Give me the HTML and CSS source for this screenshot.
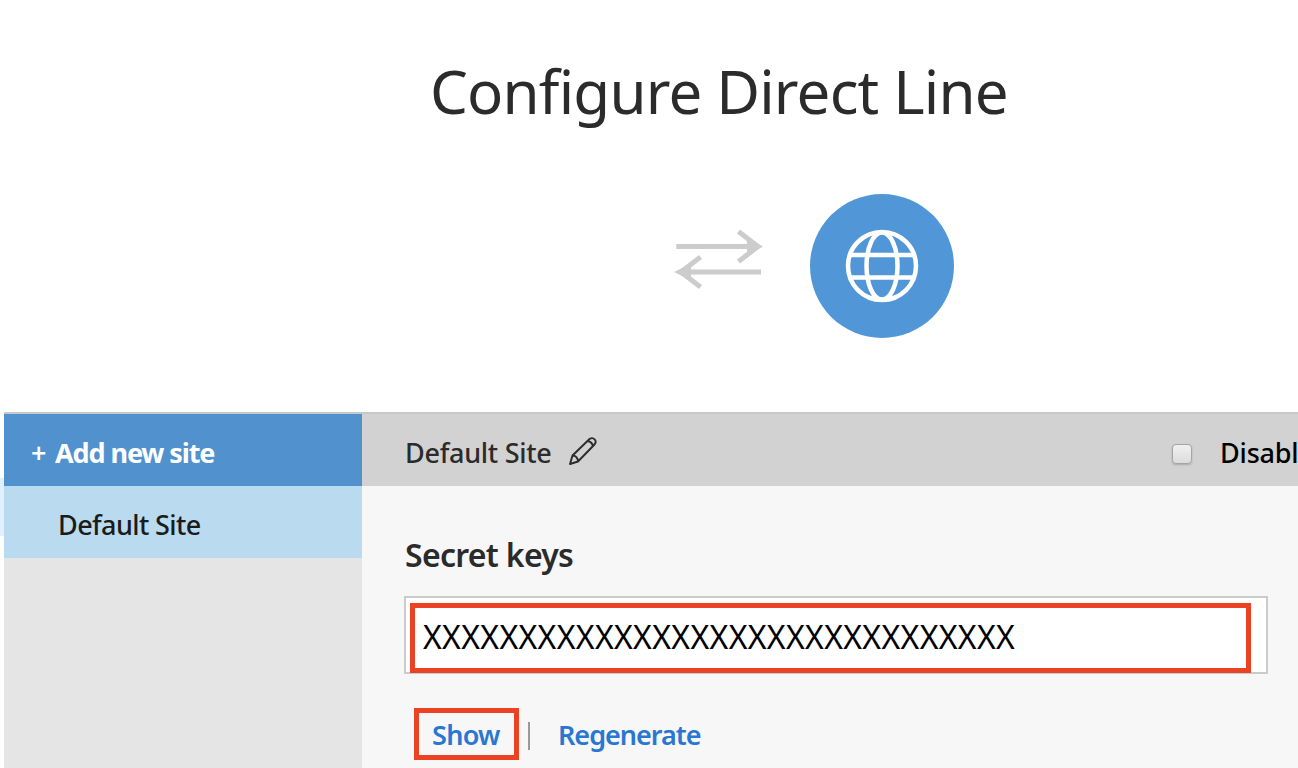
FILE: index.html
```html
<!DOCTYPE html>
<html lang="en">
<head>
<meta charset="utf-8">
<title>Configure Direct Line</title>
<link rel="stylesheet" href="styles.css">
</head>
<body>
<div class="page">
  <header class="hero">
    <h1 class="title">Configure Direct Line</h1>
    <div class="channel">
      <svg class="arrows" width="92" height="60" viewBox="0 0 92 60">
        <path d="M2.3 16.5H82M64.500 1.500L84 16.500L64.500 31.500M87 42H8M26.500 27L7 42L26.500 57" />
        <path class="tip" d="M73 8L89 16.500L73 25ZM17 33.500L0 42L17 50.500Z" />
      </svg>
      <svg class="globe" width="144" height="144" viewBox="0 0 144 144">
        <circle class="disc" cx="72" cy="72" r="72" />
        <circle cx="72" cy="72" r="34" />
        <ellipse cx="72" cy="72" rx="15.500" ry="33.500" />
        <path d="M40 61H104M40 83.500H104" />
      </svg>
    </div>
  </header>
  <div class="body">
    <div class="gutter"></div>
    <nav class="sidebar">
      <a class="add"><span class="plus">+</span><span class="add-label">Add new site</span></a>
      <a class="site"><span>Default Site</span></a>
    </nav>
    <main class="panel">
      <div class="toolbar">
        <span class="site-name">Default Site</span>
        <svg class="pencil" width="30" height="30" viewBox="0 0 30 30">
          <path d="M2 28L4.500 19.500L21.500 3C25.500 0.500 29.500 4.500 26.500 8.500L10 25.500ZM4.500 19.500C7.500 19.500 10 22 10 25.500M19.500 5C22.500 5.500 24.500 7.500 25 10.500" />
        </svg>
        <span class="check"></span>
        <span class="disable">Disabl</span>
      </div>
      <section class="content">
        <h2 class="heading">Secret keys</h2>
        <div class="field"><div class="mark"><span class="key">XXXXXXXXXXXXXXXXXXXXXXXXXXXXXXX</span></div></div>
        <div class="actions">
          <a class="show"><span>Show</span></a>
          <span class="divider"></span>
          <a class="regen">Regenerate</a>
        </div>
      </section>
    </main>
  </div>
</div>
</body>
</html>
```
FILE: styles.css
```css
* { box-sizing: border-box; }
body { margin: 0; background: #fff; font-family: "Noto Sans", "Open Sans", sans-serif; color: #2b2b2b; }
.page { width: 1298px; height: 768px; overflow: hidden; display: flex; flex-direction: column; }
.hero { height: 412px; flex: none; }
.title { margin: 0; padding: 50px 0 0 430px; font-size: 60px; line-height: 82px; font-weight: 400; letter-spacing: -.82px; white-space: nowrap; }
.channel { display: flex; padding: 62px 0 0 674px; gap: 44px; }
.arrows { margin-top: 36px; fill: none; stroke: #ccc; stroke-width: 5; }
.arrows .tip { fill: #ccc; stroke: none; }
.globe { fill: none; stroke: #fff; stroke-width: 4.5; }
.globe .disc { fill: #5197d8; stroke: none; }
.body { flex: 1; display: flex; font-size: 27px; line-height: 36px; white-space: nowrap; }
.gutter { width: 4px; height: 58px; margin-top: 66px; background: #e0f0fe; }
.sidebar { width: 358px; border-top: 2px solid #c8c8c8; background: #e5e5e5; }
.add, .site { display: flex; height: 72px; padding-top: 21px; }
.add { background: #5191ce; color: #fff; font-weight: 700; padding-left: 27px; }
.plus { width: 24px; font-weight: 600; }
.add-label { letter-spacing: -1.1px; }
.site { background: #badaef; color: #1b1b1b; font-weight: 500; padding-left: 54px; letter-spacing: -.6px; }
.panel { flex: 1; min-width: 0; background: #f7f7f7; }
.toolbar { display: flex; height: 74px; padding: 21px 0 0 43px; border-top: 2px solid #c8c8c8; background: #d2d2d2; overflow: hidden; font-weight: 500; }
.site-name { width: 147px; flex: none; letter-spacing: -.28px; }
.pencil { flex: none; margin: 1px 0 0 16px; fill: none; stroke: #2b2b2b; stroke-width: 1.9; stroke-linejoin: round; }
.check { width: 20px; height: 20px; margin: 9px 28px 0 574px; border: 1.5px solid #a5a5a5; border-radius: 4px; background: linear-gradient(#f0f0f0, #dcdcdc); box-shadow: 0 1px 2px #aaa; flex: none; }
.disable { color: #000; letter-spacing: -.2px; }
.content { padding: 49px 30px 0 42px; }
.heading { margin: 0 0 0 1px; font-size: 32px; line-height: 40px; font-weight: 600; letter-spacing: -.7px; }
.field { height: 78px; margin-top: 21px; padding: 5px 15px 0 4px; border: 2px solid #cbcbcb; background: #fff; }
.mark { height: 70px; border: 5px solid #ec4224; padding: 9px 0 0 8px; }
.key { font-size: 32px; line-height: 40px; color: #000; display: block; letter-spacing: .35px; }
.actions { display: flex; margin: 34px 0 0 10px; color: #2a77d1; font-weight: 600; }
.show { width: 105px; height: 52px; border: 5px solid #ec4224; padding: 4px 0 0 13px; letter-spacing: -.7px; }
.divider { width: 2px; height: 28px; margin: 14px 28px 0 9px; background: #999; }
.regen { padding-top: 9px; letter-spacing: -1px; }
```
